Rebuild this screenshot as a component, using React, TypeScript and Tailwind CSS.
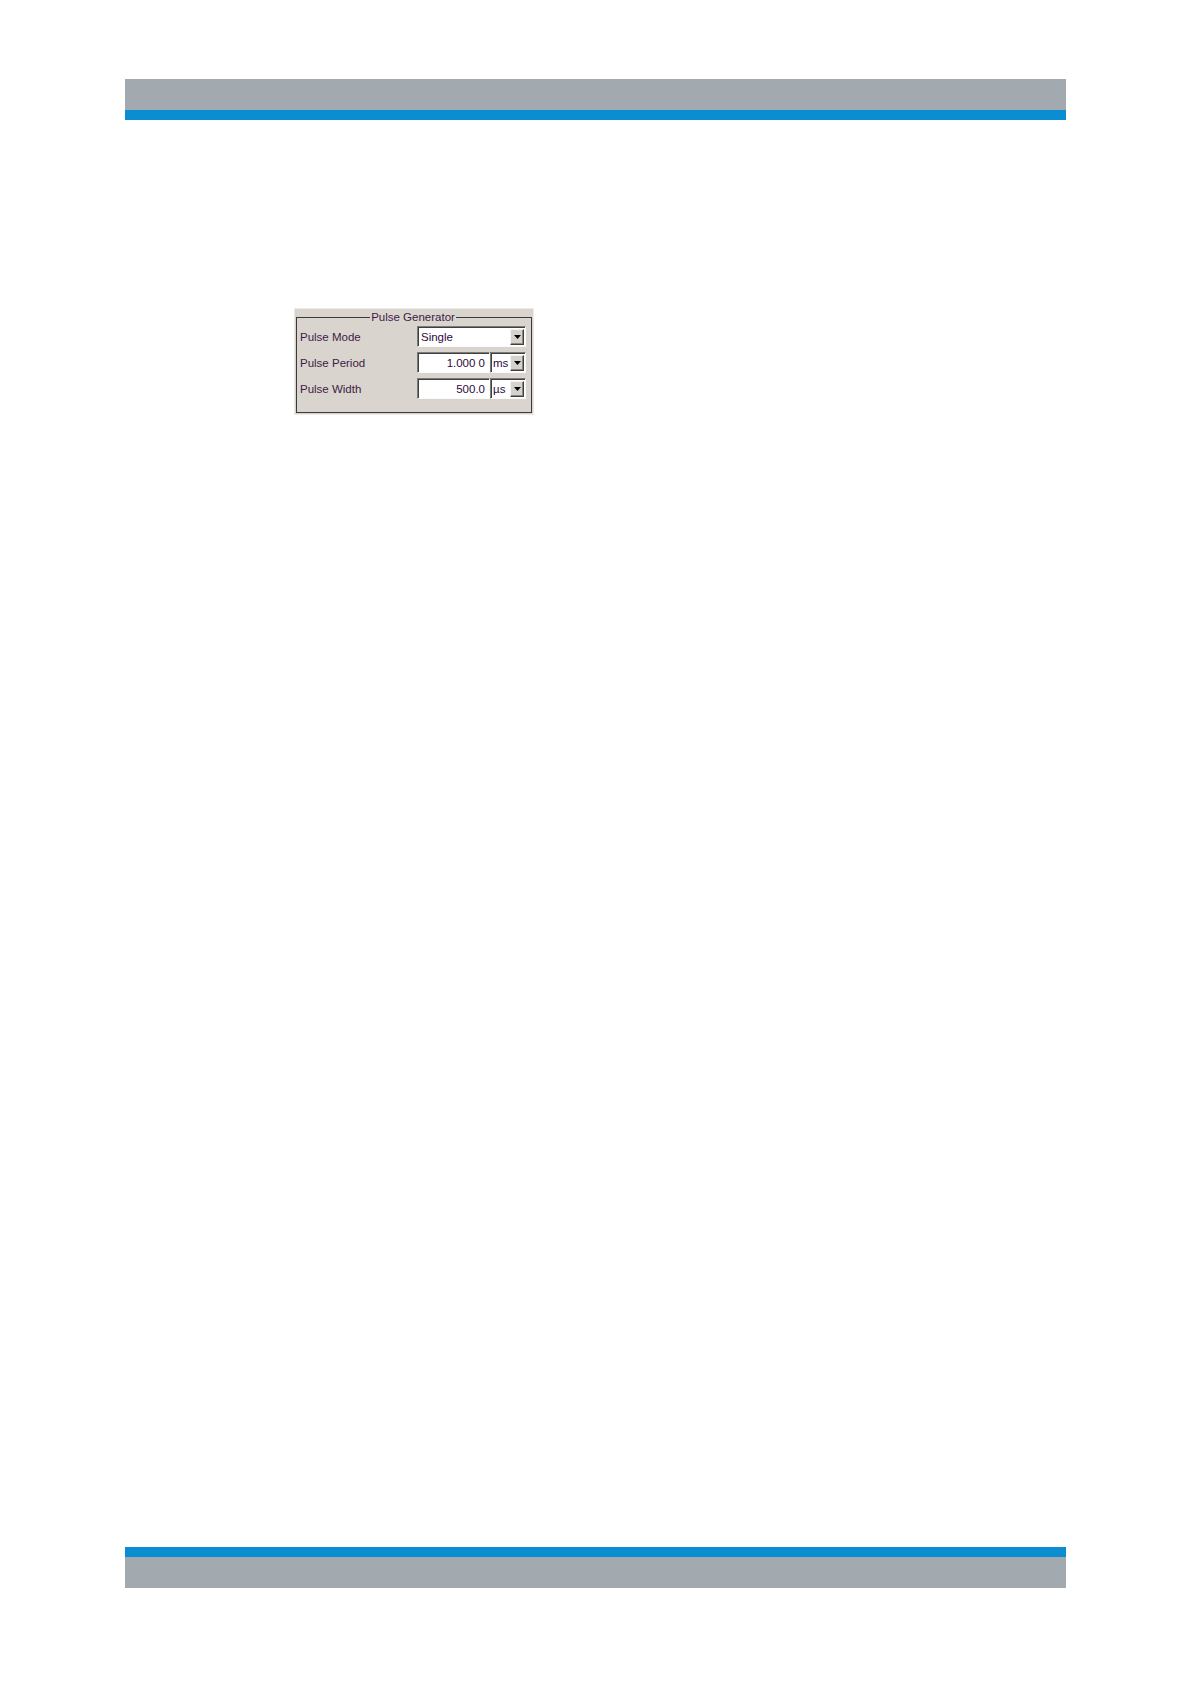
const font = { fontFamily: '"Liberation Sans", Arial, sans-serif' };

function Arrow() {
  return (
    <div className="flex h-[16px] w-[14px] shrink-0 items-center justify-center border border-t-[#f4f3f0] border-l-[#f4f3f0] border-b-[#404040] border-r-[#404040] bg-[#d6d3cd] shadow-[inset_-1px_-1px_0_#8a8884]">
      <svg width="7" height="4" viewBox="0 0 7 4">
        <path d="M0 0h7L3.5 4z" fill="#000" />
      </svg>
    </div>
  );
}

function Sunken({ className, children }: { className: string; children: React.ReactNode }) {
  return (
    <div
      className={
        "flex h-[21px] items-center border border-t-[#7c7b78] border-l-[#7c7b78] border-b-[#fafafa] border-r-[#fafafa] bg-white shadow-[inset_1px_1px_0_#404040] " +
        className
      }
    >
      {children}
    </div>
  );
}

function Row({ label, children }: { label: string; children: React.ReactNode }) {
  return (
    <div className="flex h-[21px] items-center">
      <div className="w-[117px] text-[11.5px] leading-[14px] text-[#3f1a46]">{label}</div>
      {children}
    </div>
  );
}

export default function App() {
  return (
    <div className="flex h-[1684px] flex-col bg-white" style={font}>
      <div className="mx-[125px] mt-[79px]">
        <div className="h-[31px] bg-[#a2aaaf]" />
        <div className="h-[10px] bg-[#0b8dd2]" />
      </div>

      <div className="flex-1">
        <div className="ml-[294px] mt-[188px] w-[240px] border border-[#eceae6] bg-[#d9d5ce] p-[1px]">
          <fieldset className="border border-[#3a3a3a] px-[3px] pb-[13px] pr-[5px]">
            <legend className="mx-auto px-px text-[11.5px] leading-[14px] text-[#3f1a46]">Pulse Generator</legend>
            <div className="flex flex-col gap-[5px] pt-[2px]">
              <Row label="Pulse Mode">
                <Sunken className="w-[109px] justify-between pl-[3px] pr-px">
                  <span className="text-[11.5px] leading-[14px] text-[#2c0a40]">Single</span>
                  <Arrow />
                </Sunken>
              </Row>
              <Row label="Pulse Period">
                <Sunken className="w-[73px] justify-end pr-[4px]">
                  <span className="text-[11.5px] leading-[14px] text-[#2c0a40]">1.000 0</span>
                </Sunken>
                <Sunken className="w-[36px] justify-between pl-[2px] pr-px">
                  <span className="text-[11.5px] leading-[14px] text-[#2c0a40]">ms</span>
                  <Arrow />
                </Sunken>
              </Row>
              <Row label="Pulse Width">
                <Sunken className="w-[73px] justify-end pr-[4px]">
                  <span className="text-[11.5px] leading-[14px] text-[#2c0a40]">500.0</span>
                </Sunken>
                <Sunken className="w-[36px] justify-between pl-[2px] pr-px">
                  <span className="text-[11.5px] leading-[14px] text-[#2c0a40]">µs</span>
                  <Arrow />
                </Sunken>
              </Row>
            </div>
          </fieldset>
        </div>
      </div>

      <div className="mx-[125px] mb-[96px]">
        <div className="h-[10px] bg-[#0b8dd2]" />
        <div className="h-[31px] bg-[#a2aaaf]" />
      </div>
    </div>
  );
}
